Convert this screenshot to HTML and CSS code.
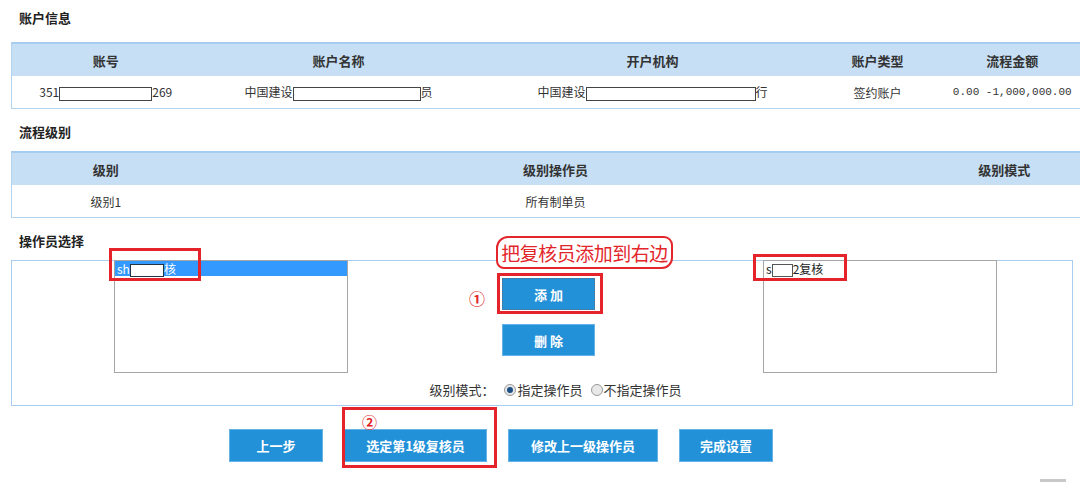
FILE: index.html
```html
<!DOCTYPE html>
<html lang="zh-CN">
<head>
    <meta charset="UTF-8">
    <title>流程设置</title>
    <link rel="stylesheet" href="styles.css">
</head>
<body>
<div class="page">
    <h3 class="sec-title first">账户信息</h3>
    <table class="grid">
        <colgroup><col style="width:188px"><col style="width:278px"><col style="width:350px"><col style="width:100px"><col style="width:170px"></colgroup>
        <tr><th>账号</th><th>账户名称</th><th>开户机构</th><th>账户类型</th><th>流程金额</th></tr>
        <tr>
            <td>351<span class="mask" style="width:93px"></span>269</td>
            <td>中国建设<span class="mask" style="width:128px"></span>员</td>
            <td>中国建设<span class="mask" style="width:170px"></span>行</td>
            <td>签约账户</td>
            <td class="money">0.00 -1,000,000.00</td>
        </tr>
    </table>

    <h3 class="sec-title">流程级别</h3>
    <table class="grid">
        <colgroup><col style="width:188px"><col style="width:712px"><col style="width:186px"></colgroup>
        <tr><th>级别</th><th>级别操作员</th><th>级别模式</th></tr>
        <tr><td>级别1</td><td>所有制单员</td><td></td></tr>
    </table>

    <h3 class="sec-title">操作员选择</h3>
    <div class="op-panel">
        <div class="listbox left-box">
            <div class="opt selected">sh<span class="mask small" style="width:34px"></span>核</div>
        </div>
        <div class="op-middle">
            <div class="op-buttons">
                <button class="btn focus">添 加</button>
                <button class="btn">删 除</button>
            </div>
            <div class="mode-row">
                <span class="mode-label">级别模式：</span>
                <label><span class="radio on"></span>指定操作员</label>
                <label><span class="radio"></span>不指定操作员</label>
            </div>
        </div>
        <div class="listbox right-box">
            <div class="opt">s<span class="mask small" style="width:21px"></span>2复核</div>
        </div>
    </div>

    <div class="actions">
        <button class="btn">上一步</button>
        <button class="btn wide">选定第1级复核员</button>
        <button class="btn wider">修改上一级操作员</button>
        <button class="btn">完成设置</button>
    </div>
</div>

<!-- 标注 -->
<div class="note-bubble">把复核员添加到右边</div>
<div class="mark mark-a"></div>
<div class="mark mark-b"></div>
<div class="mark mark-c"></div>
<div class="mark mark-d"></div>
<span class="num num-1">①</span>
<span class="num num-2">②</span>
<div class="corner-bar"></div>
</body>
</html>
```

FILE: styles.css
```css
body { margin: 0; background: #fff; color: #333; font-family: "Noto Sans CJK SC", "Liberation Sans", sans-serif; font-size: 13px; overflow: hidden; }
.page { padding-left: 11px; }
.sec-title { margin: 0; padding: 15px 0 11px 8px; font-size: 13px; line-height: 16px; font-weight: bold; color: #222; }
.sec-title.first { padding-top: 10px; padding-bottom: 16px; }

.grid { border-collapse: collapse; table-layout: fixed; width: 1086px; border: 1px solid #b3d4f1; border-top: 2px solid #a6cdef; }
.grid th { height: 32px; padding: 0; background: #c6dff5; font-size: 13px; font-weight: bold; color: #333; text-align: center; }
.grid td { height: 32px; padding: 0; font-size: 12px; color: #333; text-align: center; white-space: nowrap; }
.grid td.money { font-family: "Liberation Mono", monospace; font-size: 11px; }
.mask { display: inline-block; height: 14px; border: 1px solid #444; background: #fff; vertical-align: middle; box-sizing: border-box; }
.mask.small { height: 13px; border-color: #555; }

.op-panel { display: flex; width: 1062px; height: 146px; box-sizing: border-box; border: 1px solid #a9cdee; }
.listbox { width: 234px; height: 113px; margin-top: -1px; box-sizing: border-box; border: 1px solid #a6a6a6; background: #fff; }
.left-box { margin-left: 102px; }
.opt { height: 15px; line-height: 15px; padding-left: 2px; font-size: 12px; color: #222; }
.opt.selected { background: #3399ff; color: #fff; }
.opt.selected .mask { border-color: #234; }
.op-middle { width: 415px; padding-top: 17px; }
.op-buttons { display: flex; flex-direction: column; align-items: center; gap: 14px; padding-right: 14px; }
.op-buttons .btn { width: 93px; height: 32px; }
.mode-row { margin-top: 26px; display: flex; justify-content: center; align-items: center; gap: 8px; font-size: 13px; line-height: 16px; color: #333; }
.mode-row label { display: flex; align-items: center; }
.mode-label { margin-right: 2px; }
.radio { display: inline-block; width: 10px; height: 10px; margin-right: 1px; border: 1px solid #9a9a9a; border-radius: 50%; background: #e8e8e8; position: relative; }
.radio.on::after { content: ""; position: absolute; left: 2px; top: 2px; width: 6px; height: 6px; border-radius: 50%; background: #1d4f86; }

.btn { height: 33px; padding: 0; border: 1px solid #66b3e8; background: #2391d8; color: #fff; font-family: "Noto Sans CJK SC", sans-serif; font-size: 13px; font-weight: bold; cursor: pointer; }
.btn.focus { border: 1px dotted #5b6f80; }
.actions { display: flex; gap: 21px; margin-top: 23px; padding-left: 218px; }
.actions .btn { width: 94px; }
.actions .btn.wide { width: 143px; }
.actions .btn.wider { width: 150px; }

.note-bubble { position: absolute; left: 496px; top: 236px; width: 177px; height: 33px; box-sizing: border-box; border: 2px solid #e3262b; border-radius: 12px 9px 11px 8px; color: #e3262b; font-size: 19px; line-height: 29px; text-align: center; white-space: nowrap; letter-spacing: -0.5px; background: #fff; }
.mark { position: absolute; box-sizing: border-box; border: 3px solid #e4232b; }
.mark-a { left: 109px; top: 248px; width: 92px; height: 33px; }
.mark-b { left: 497px; top: 273px; width: 106px; height: 41px; }
.mark-c { left: 753px; top: 254px; width: 94px; height: 27px; }
.mark-d { left: 342px; top: 407px; width: 155px; height: 61px; }
.num { position: absolute; color: #e3262b; font-weight: bold; line-height: 1; }
.num-1 { left: 469px; top: 290px; font-size: 16px; }
.num-2 { left: 362px; top: 414px; font-size: 15px; }
.corner-bar { position: absolute; left: 1040px; top: 479px; width: 26px; height: 3px; background: #c8c8c8; }
```
